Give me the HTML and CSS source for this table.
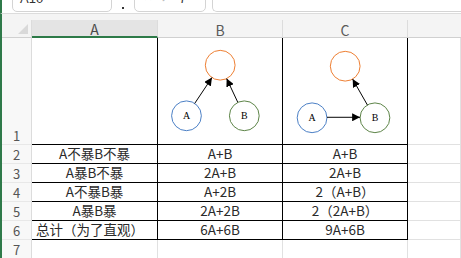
FILE: index.html
```html
<!DOCTYPE html>
<html>
<head>
<meta charset="utf-8">
<link rel="stylesheet" href="styles.css">
</head>
<body>
<div class="toolbar">
  <div class="namebox"><span class="nb-text">A10</span><span class="nb-chev">&#8964;</span></div>
  <div class="sep-dot"></div>
  <div class="fxbox"><span class="fx-x">&#10005;</span><span class="fx-ok">&#10003;</span><span class="fx-fx">fx</span></div>
  <div class="formula"></div>
</div>
<div class="strip"></div>
<div class="sheet">
  <div class="corner"><span class="tri"></span></div>
  <div class="colhead sel">A</div>
  <div class="colhead">B</div>
  <div class="colhead">C</div>
  <div class="colhead rest"></div>

  <div class="rowhead tall">1</div>
  <div class="cell tb"></div>
  <div class="cell tb">
    <svg class="diag" viewBox="0 0 125 107" width="125" height="107">
      <defs>
        <marker id="ah" viewBox="0 0 10 10" refX="10" refY="5" markerWidth="8" markerHeight="8" markerUnits="userSpaceOnUse" orient="auto">
          <path d="M0,0 L10,5 L0,10 Z" fill="#000"/>
        </marker>
      </defs>
      <circle cx="62.7" cy="27" r="15" fill="none" stroke="#ed7d31" stroke-width="1"/>
      <circle cx="28.7" cy="78" r="15" fill="none" stroke="#4a7ec4" stroke-width="1"/>
      <circle cx="87" cy="78" r="15" fill="none" stroke="#5b8346" stroke-width="1"/>
      <text x="28.7" y="81.5" class="lbl">A</text>
      <text x="87" y="81.5" class="lbl">B</text>
      <line x1="37" y1="65.5" x2="54.4" y2="39.5" stroke="#000" stroke-width="1" marker-end="url(#ah)"/>
      <line x1="80.5" y1="64.5" x2="69.2" y2="40.5" stroke="#000" stroke-width="1" marker-end="url(#ah)"/>
    </svg>
  </div>
  <div class="cell tb">
    <svg class="diag" viewBox="0 0 125 107" width="125" height="107">
      <defs>
        <marker id="ah2" viewBox="0 0 10 10" refX="10" refY="5" markerWidth="8" markerHeight="8" markerUnits="userSpaceOnUse" orient="auto">
          <path d="M0,0 L10,5 L0,10 Z" fill="#000"/>
        </marker>
      </defs>
      <circle cx="62.7" cy="28" r="15" fill="none" stroke="#ed7d31" stroke-width="1"/>
      <circle cx="29.3" cy="80" r="15" fill="none" stroke="#4a7ec4" stroke-width="1"/>
      <circle cx="92.7" cy="80" r="15" fill="none" stroke="#5b8346" stroke-width="1"/>
      <text x="29.3" y="83.5" class="lbl">A</text>
      <text x="92.7" y="83.5" class="lbl">B</text>
      <line x1="44.3" y1="79.5" x2="77.7" y2="79.5" stroke="#000" stroke-width="1" marker-end="url(#ah2)"/>
      <line x1="85.2" y1="67.3" x2="70.2" y2="41" stroke="#000" stroke-width="1" marker-end="url(#ah2)"/>
    </svg>
  </div>
  <div class="cell"></div>

  <div class="rowhead">2</div>
  <div class="cell tb c">A不暴B不暴</div>
  <div class="cell tb c">A+B</div>
  <div class="cell tb c">A+B</div>
  <div class="cell"></div>

  <div class="rowhead">3</div>
  <div class="cell tb c">A暴B不暴</div>
  <div class="cell tb c">2A+B</div>
  <div class="cell tb c">2A+B</div>
  <div class="cell"></div>

  <div class="rowhead">4</div>
  <div class="cell tb c">A不暴B暴</div>
  <div class="cell tb c">A+2B</div>
  <div class="cell tb c">2（A+B）</div>
  <div class="cell"></div>

  <div class="rowhead">5</div>
  <div class="cell tb c">A暴B暴</div>
  <div class="cell tb c">2A+2B</div>
  <div class="cell tb c">2（2A+B）</div>
  <div class="cell"></div>

  <div class="rowhead">6</div>
  <div class="cell tb lft">总计（为了直观）</div>
  <div class="cell tb c">6A+6B</div>
  <div class="cell tb c">9A+6B</div>
  <div class="cell"></div>

  <div class="rowhead">7</div>
  <div class="cell"></div>
  <div class="cell"></div>
  <div class="cell"></div>
  <div class="cell"></div>
</div>
</body>
</html>
```
FILE: styles.css
```css
* { box-sizing: border-box; }
html, body {
  margin: 0;
  padding: 0;
  background: #fff;
  overflow: hidden;
  width: 461px;
  height: 258px;
}
body {
  font-family: "Noto Sans CJK SC", "Noto Sans", sans-serif;
  color: #2a2a2a;
}
.toolbar {
  height: 13px;
  overflow: hidden;
  display: flex;
  align-items: flex-end;
  background: #fff;
  border-left: 2px solid #2f7a4a;
  padding-left: 10px;
}
.namebox {
  width: 100px;
  height: 24px;
  flex: none;
  border: 1px solid #d4d4d4;
  border-radius: 5px;
  display: flex;
  align-items: center;
  justify-content: space-between;
  padding: 0 5px 0 7px;
  margin-bottom: 1px;
  font-family: "Liberation Sans", sans-serif;
  font-size: 13px;
  color: #333;
  line-height: 1;
}
.nb-text { position: relative; top: -2px; }
.nb-chev { font-size: 12px; color: #555; position: relative; top: -6px; }
.sep-dot {
  width: 2px;
  height: 2px;
  background: #333;
  margin: 0 10px 4px 10px;
  flex: none;
}
.fxbox {
  width: 72px;
  height: 24px;
  flex: none;
  border: 1px solid #d4d4d4;
  border-radius: 5px;
  display: flex;
  align-items: center;
  padding-left: 8px;
  margin-bottom: 1px;
  line-height: 1;
}
.fx-x { color: #bdbdbd; font-size: 12px; position: relative; top: -4px; }
.fx-ok { color: #bdbdbd; font-size: 12px; margin-left: 8px; position: relative; top: -4px; }
.fx-fx { color: #333; font-family: "Liberation Serif", serif; font-style: italic; font-size: 14px; margin-left: 12px; position: relative; top: -4px; }
.formula {
  flex: 1;
  height: 24px;
  margin-left: 6px;
  margin-bottom: 1px;
  border: 1px solid #d4d4d4;
  border-right: none;
  border-radius: 5px 0 0 5px;
}
.strip {
  height: 7px;
  background: #f4f4f4;
  border-top: 1px solid #dcdcdc;
  border-left: 2px solid #2f7a4a;
}
.sheet {
  display: grid;
  grid-template-columns: 30px 126px 125px 125px 1fr;
  grid-template-rows: 18px 107px 19px 19px 19px 19px 19px 19px;
  border-left: 2px solid #2f7a4a;
}
.corner {
  background: #f4f4f4;
  border-right: 1px solid #dcdcdc;
  border-bottom: 1px solid #d0d0d0;
  position: relative;
}
.tri {
  position: absolute;
  right: 3px;
  bottom: 3px;
  width: 0;
  height: 0;
  border-left: 10px solid transparent;
  border-bottom: 10px solid #d9d9d9;
}
.colhead {
  background: #f4f4f4;
  border-right: 1px solid #dcdcdc;
  border-bottom: 1px solid #d0d0d0;
  display: flex;
  align-items: center;
  justify-content: center;
  font-size: 14px;
  color: #5a5a5a;
  padding-top: 2px;
  line-height: 1;
}
.colhead.sel {
  background: #e4e4e4;
  border-bottom: 2px solid #2d7a48;
  color: #4a4a4a;
}
.colhead.rest { border-right: none; }
.rowhead {
  background: #f8f8f8;
  border-right: 1px solid #dcdcdc;
  border-bottom: 1px solid #e8e8e8;
  display: flex;
  align-items: center;
  justify-content: center;
  font-size: 13px;
  color: #555;
  line-height: 1;
}
.rowhead.tall {
  align-items: flex-end;
  padding-bottom: 2px;
}
.cell {
  border-right: 1px solid #e1e1e1;
  border-bottom: 1px solid #e1e1e1;
  font-size: 13.5px;
  line-height: 1;
  white-space: nowrap;
  display: flex;
  align-items: center;
}
.cell.tb {
  border-right-color: #000;
  border-bottom-color: #000;
}
.cell.c { justify-content: center; }
.cell.lft { justify-content: flex-start; padding-left: 4px; }
.diag { display: block; }
.lbl {
  font-family: "Liberation Serif", serif;
  font-size: 10px;
  text-anchor: middle;
  fill: #000;
}
```
